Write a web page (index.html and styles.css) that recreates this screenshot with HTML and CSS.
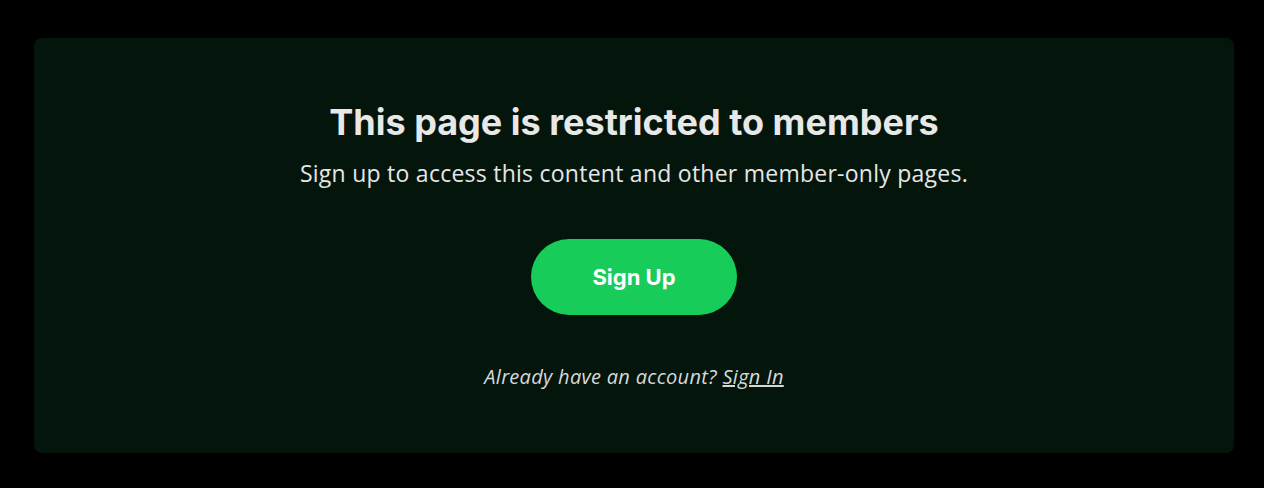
FILE: index.html
```html
<!DOCTYPE html>
<html>
<head>
<meta charset="utf-8">
<link rel="stylesheet" href="styles.css">
</head>
<body>
<main class="page">
  <section class="card">
    <h1 class="title">This page is restricted to members</h1>
    <p class="subtitle">Sign up to access this content and other member-only pages.</p>
    <a class="btn" href="#">Sign Up</a>
    <p class="signin">Already have an account? <a href="#" class="signin-link">Sign In</a></p>
  </section>
</main>
</body>
</html>
```
FILE: styles.css
```css
html, body {
  margin: 0;
  padding: 0;
  background: #000;
}
.page {
  padding: 38px 30px 35px 34px;
}
.card {
  width: 1200px;
  height: 415px;
  box-sizing: border-box;
  background: #04160c;
  border-radius: 8px;
  display: flex;
  flex-direction: column;
  align-items: center;
  padding-top: 62px;
}
.title {
  margin: 0;
  font-family: Inter, "Liberation Sans", sans-serif;
  font-weight: 700;
  font-size: 36px;
  line-height: 44px;
  color: #e8e8e8;
}
.subtitle {
  margin: 14px 0 0;
  font-family: "Open Sans", "Liberation Sans", sans-serif;
  font-size: 23px;
  letter-spacing: 0.25px;
  line-height: 30px;
  color: #e6e6e6;
}
.btn {
  margin-top: 51px;
  width: 206px;
  height: 76px;
  border-radius: 38px;
  background: #18cc5a;
  color: #fff;
  font-family: Inter, "Liberation Sans", sans-serif;
  font-weight: 700;
  font-size: 22px;
  display: flex;
  align-items: center;
  justify-content: center;
  text-decoration: none;
}
.signin {
  margin: 49px 0 0;
  font-family: "Open Sans", "Liberation Sans", sans-serif;
  font-style: italic;
  font-size: 20px;
  letter-spacing: 0.3px;
  line-height: 26px;
  color: #d8d8d8;
}
.signin-link {
  color: #d8d8d8;
  text-decoration: underline;
}
```
